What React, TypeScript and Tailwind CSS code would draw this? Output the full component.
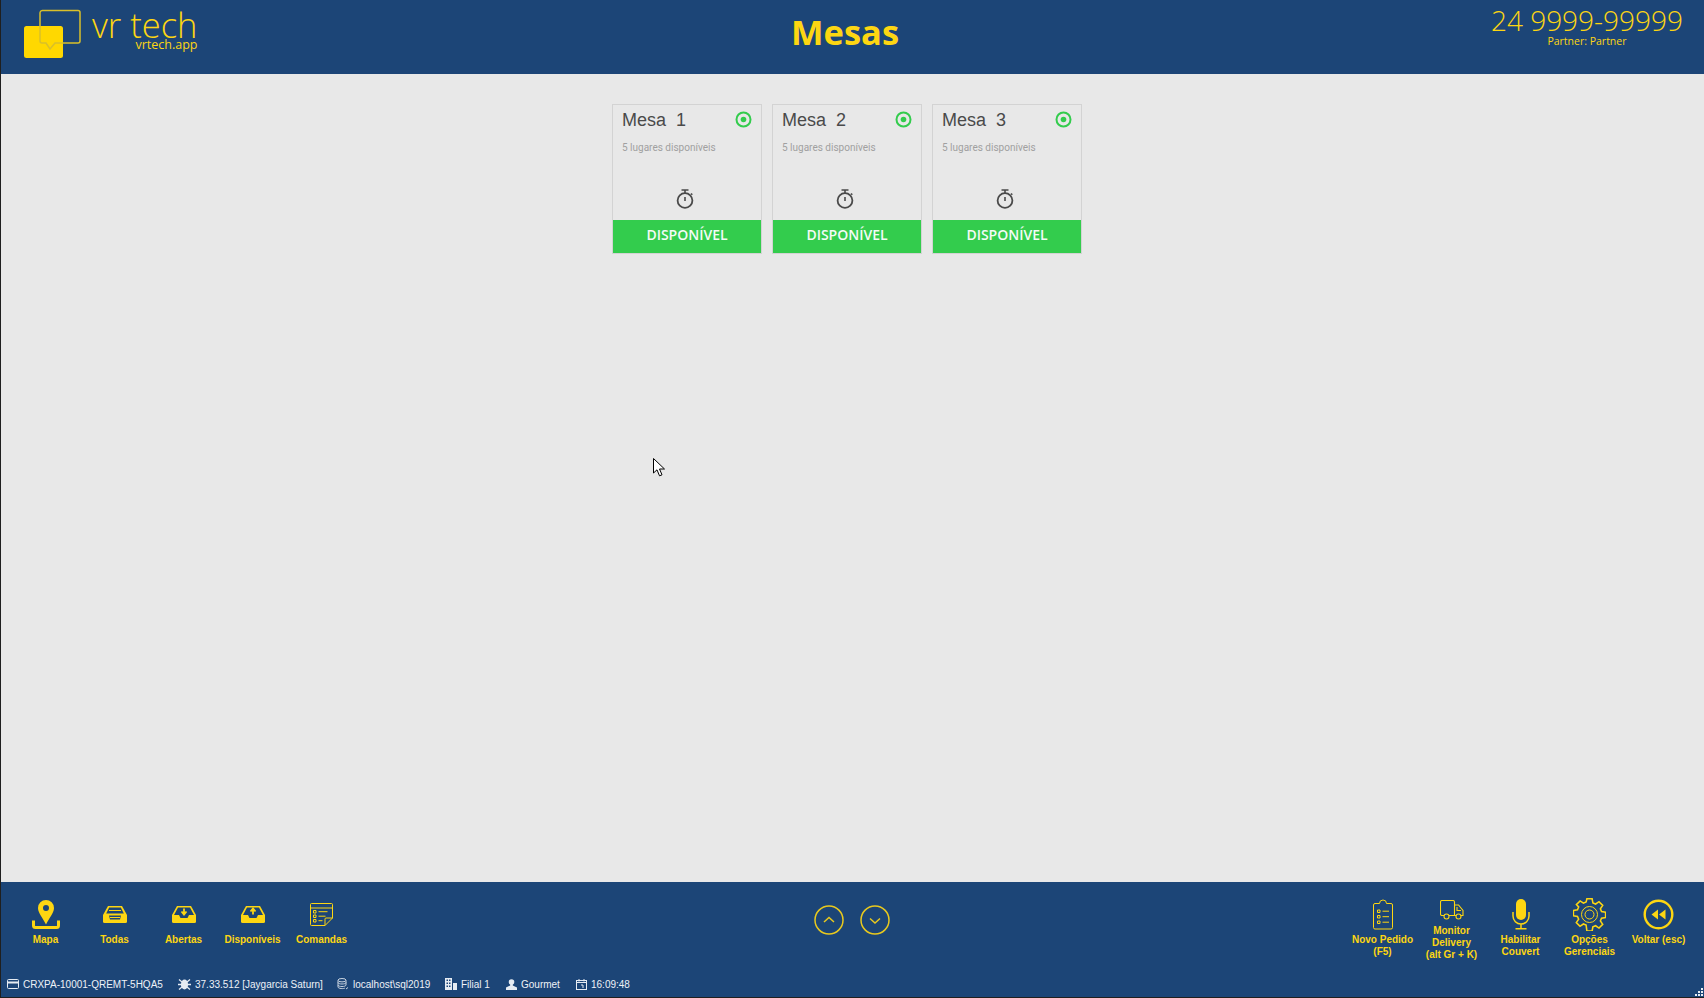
const Logo = () => (
  <svg width="60" height="52" viewBox="0 0 60 52" className="shrink-0">
    <rect x="0" y="17" width="39" height="32" rx="2.500" fill="#ffd800" />
    <path d="M19 1.500h35a2 2 0 0 1 2 2v28.500a2 2 0 0 1-2 2H31l-5 6-4-6h-4a2 2 0 0 1-2-2V4a2.500 2.500 0 0 1 3-2.500z" fill="none" stroke="#d9c02a" strokeWidth="1.500" />
  </svg>
);

const TargetIcon = () => (
  <svg width="17" height="17" viewBox="0 0 17 17" className="mb-[2px]">
    <circle cx="8.500" cy="8.500" r="7" fill="none" stroke="#33cc4d" strokeWidth="2" />
    <circle cx="8.500" cy="8.500" r="2.800" fill="#33cc4d" />
  </svg>
);

const TimerIcon = () => (
  <svg width="18" height="20" viewBox="0 0 18 20" fill="none" stroke="#4a4a4a">
    <circle cx="9" cy="11.500" r="7.400" strokeWidth="1.800" />
    <path d="M5.500 1h7M9 1v3M9 8v4M15 4.500l1.300 1.300" strokeWidth="1.600" />
  </svg>
);

const Mapa = () => (
  <svg width="28" height="29" viewBox="0 0 28 29">
    <path fillRule="evenodd" d="M14 0a8 8 0 0 1 8 8c0 5-5 10-8 16.500C11 18 6 13 6 8a8 8 0 0 1 8-8zm0 5a3 3 0 1 0 0 6 3 3 0 0 0 0-6z" fill="#fdd612" />
    <path d="M1.500 20.500v5a2 2 0 0 0 2 2h21a2 2 0 0 0 2-2v-5" fill="none" stroke="#fdd612" strokeWidth="3" />
  </svg>
);

const Tray = ({ mark }: { mark: 'all' | 'down' | 'up' }) => (
  <svg width="24" height="17" viewBox="0 0 24 17">
    <path d="M5 0h14l5 9v6.500a1.500 1.500 0 0 1-1.500 1.500h-21A1.500 1.500 0 0 1 0 15.500V9z" fill="#fdd612" />
    {mark === 'all' ? (
      <g>
        <path d="M6.200 1.500h11.600l3 6H3.200z" fill="#1c4577" />
        <path d="M6 4.500h12" stroke="#fdd612" strokeWidth="1" />
        <path d="M6 9.500h12l-1 4H7z" fill="#1c4577" />
        <path d="M7 11.500h10" stroke="#fdd612" strokeWidth="1" />
      </g>
    ) : (
      <g>
        <path d="M6 1.500h12l4 7.500h-5l-1.500 3h-7L7 9H2z" fill="#1c4577" />
        <path d={mark === 'down' ? 'M12 2.500v5.500M9.500 5.500 12 8.500l2.500-3' : 'M12 8.500V3M9.500 5.500 12 2.500l2.500 3'} fill="none" stroke="#fdd612" strokeWidth="1.800" />
      </g>
    )}
  </svg>
);

const Comandas = () => (
  <svg width="24" height="24" viewBox="0 0 24 24" fill="none" stroke="#fdd612" strokeWidth="1">
    <path d="M1.500.500h20a1 1 0 0 1 1 1V15l-7.500 7.500H1.500a1 1 0 0 1-1-1V1.500a1 1 0 0 1 1-1zM.500 5h22M22.500 15H16a1 1 0 0 0-1 1v6.500" />
    <path d="M3.500 7.500H6V10H3.500zM3.500 12H6v2.500H3.500zM3.500 16.500H6V19H3.500zM8.500 8.700h9M8.500 13.200h7M8.500 17.700h4" />
  </svg>
);

const Clipboard = () => (
  <svg width="20" height="31" viewBox="0 0 20 31" fill="none" stroke="#fdd612" strokeWidth="1">
    <path d="M6.500 4.500H2a1.500 1.500 0 0 0-1.500 1.500v22.500A1.500 1.500 0 0 0 2 30h16a1.500 1.500 0 0 0 1.500-1.500V6A1.500 1.500 0 0 0 18 4.500h-4.500a3.500 3.500 0 0 0-7 0z" />
    <path d="M4.500 11h2.500v2.500H4.500zM4.500 16.500h2.500V19H4.500zM4.500 22h2.500v2.500H4.500zM9.500 12.200h6.500M9.500 17.700h6.500M9.500 23.200h6.500" />
  </svg>
);

const Truck = () => (
  <svg width="24" height="20" viewBox="0 0 24 20" fill="none" stroke="#fdd612" strokeWidth="1.100">
    <path d="M4 15.500H2a1.500 1.500 0 0 1-1.500-1.500V2A1.500 1.500 0 0 1 2 .500h11A1.500 1.500 0 0 1 14.500 2v13.500H9M14.500 5h4l4.500 5.500v5h-2M14.500 15.500h2" />
    <path d="M17 7v3.500h4" />
    <circle cx="6.500" cy="16.500" r="2.500" />
    <circle cx="18.500" cy="16.500" r="2.500" />
  </svg>
);

const Mic = () => (
  <svg width="18" height="31" viewBox="0 0 18 31">
    <rect x="4" y="0" width="10" height="21" rx="5" fill="#fdd612" />
    <path d="M1 13v4a8 8 0 0 0 16 0v-4M9 25v5M3.500 29.800h11" fill="none" stroke="#fdd612" strokeWidth="1.500" />
  </svg>
);

const Gear = () => (
  <svg width="33" height="33" viewBox="0 0 33 33" fill="none" stroke="#fdd612">
    <path strokeWidth="1.600" d="M13.800 1h5.400l.8 4.200 2.800 1.200 3.500-2.400 3.800 3.800-2.400 3.500 1.200 2.800 4.200.8v5.400l-4.200.8-1.200 2.800 2.400 3.500-3.800 3.800-3.500-2.400-2.800 1.200-.8 4.200h-5.400L13 28.200l-2.800-1.200-3.500 2.400-3.800-3.800 2.400-3.500-1.200-2.800-4.200-.8v-5.400l4.200-.8 1.200-2.800L3 7l3.800-3.800 3.500 2.400L13 4.400z" transform="translate(.5 -.2) scale(.97)" />
    <circle cx="16.500" cy="16.500" r="8" strokeWidth="1" />
    <circle cx="16.500" cy="16.500" r="4.500" strokeWidth="1" />
  </svg>
);

const Rewind = () => (
  <svg width="31" height="31" viewBox="0 0 31 31">
    <circle cx="15.500" cy="15.500" r="13.800" fill="none" stroke="#fdd612" strokeWidth="2.400" />
    <path d="M15 10.500v10l-6.500-5zM22.500 10.500v10l-6.500-5z" fill="#fdd612" />
  </svg>
);

const Round = ({ up }: { up: boolean }) => (
  <svg width="30" height="30" viewBox="0 0 30 30" fill="none" stroke="#e9c91e">
    <circle cx="15" cy="15" r="14" strokeWidth="1.500" />
    <path d={up ? 'M10 17l5-4.500 5 4.500' : 'M10 13.500l5 4.500 5-4.500'} strokeWidth="1.500" />
  </svg>
);

const Card = () => (
  <svg width="12" height="10" viewBox="0 0 12 10" fill="none" stroke="#e6ecf3">
    <rect x=".5" y=".5" width="11" height="9" rx="1" />
    <path d="M.5 3.500h11" strokeWidth="2" />
  </svg>
);

const Bug = () => (
  <svg width="13" height="12" viewBox="0 0 13 12" fill="#e6ecf3">
    <ellipse cx="6.500" cy="6.500" rx="3.600" ry="5" />
    <path d="M1 1.500l3 2.500M12 1.500L9 4M0 6.500h3M13 6.500h-3M1 11.500l3-2.500M12 11.500L9 9" stroke="#e6ecf3" strokeWidth="1.300" />
  </svg>
);

const Db = () => (
  <svg width="12" height="12" viewBox="0 0 12 12" fill="none" stroke="#c8d3e0">
    <ellipse cx="5" cy="2.200" rx="4" ry="1.700" />
    <path d="M1 4.500c0 2 8 2 8 0M1 7c0 2 8 2 8 0M1 2.500v6.500c0 1.700 6 2 7 1M9 2.500V7M9 11l2-1.500" />
  </svg>
);

const Building = () => (
  <svg width="12" height="12" viewBox="0 0 12 12" fill="#e6ecf3">
    <path fillRule="evenodd" d="M0 0h7v12H0zm1.500 1.500v1.500h1.500V1.500zm2.500 0v1.500h1.500V1.500zM1.500 4.500V6h1.500V4.500zm2.500 0V6h1.500V4.500zM1.500 7.500V9h1.500V7.500zm2.500 0V9h1.500V7.500z" />
    <path d="M8 5h4v7H8z" />
  </svg>
);

const User = () => (
  <svg width="11" height="11" viewBox="0 0 11 11" fill="#e6ecf3">
    <circle cx="5.500" cy="3" r="2.800" />
    <path d="M4.200 5h2.600v1.500L11 8.500V11H0V8.500l4.200-2z" />
  </svg>
);

const Calendar = () => (
  <svg width="11" height="11" viewBox="0 0 11 11" fill="none" stroke="#e6ecf3">
    <rect x=".5" y="1.500" width="10" height="9" />
    <path d="M.5 3.500h10M3 0v2.500M8 0v2.500M5 6h2v3" />
  </svg>
);

const Tool = ({ icon, lines, top = false }: { icon: React.ReactNode; lines: string[]; top?: boolean }) => (
  <div className="flex w-[69px] flex-col items-center">
    <div className={`flex items-center justify-center ${top ? 'h-[24px]' : 'h-[33px]'}`}>{icon}</div>
    <div className="mt-[3px] text-center text-[10px] leading-[12px] font-bold text-[#fdd612]">
      {lines.map((line) => (
        <div key={line} className="whitespace-nowrap">{line}</div>
      ))}
    </div>
  </div>
);

const Status = ({ icon, text, className }: { icon: React.ReactNode; text: string; className: string }) => (
  <div className={`flex items-center ${className}`}>
    {icon}
    <span className="ml-[4px] whitespace-nowrap">{text}</span>
  </div>
);

export default function App() {
  return (
    <div className="relative flex h-[998px] flex-col overflow-hidden border-b border-l border-[#1f1f1f] bg-[#e8e8e8] font-['Liberation_Sans',sans-serif]">
      {/* Header */}
      <header className="flex h-[74px] shrink-0 bg-[#1c4577] text-[#fdd612]">
        <div className="flex w-[790px] pl-[23px] pt-[9px]">
          <Logo />
          <div className="ml-[8px] mt-[1px] flex flex-col items-end font-['Open_Sans',sans-serif]">
            <div className="text-[34.500px] leading-[30px] font-light">vr tech</div>
            <div className="text-[12.500px] leading-[10px]">vrtech.app</div>
          </div>
        </div>
        <h1 className="pt-[9px] font-['Open_Sans',sans-serif] text-[34.500px] leading-[45px] font-bold">Mesas</h1>
        <div className="ml-auto flex flex-col items-center pr-[21px] pt-[5px] font-['Open_Sans',sans-serif]">
          <div className="text-[28px] leading-[30px] font-light">24 9999-99999</div>
          <div className="mt-[1px] text-[10.500px] leading-[11px]">Partner: Partner</div>
        </div>
      </header>

      {/* Tables */}
      <main className="flex flex-1 gap-[10px] pl-[611px] pt-[30px]">
        {[1, 2, 3].map((n) => (
          <div key={n} className="flex h-[150px] w-[150px] flex-col border border-[#d3d3d3]">
            <div className="flex items-center justify-between pl-[9px] pr-[9px] pt-[3px]">
              <span className="whitespace-pre text-[18px] leading-[24px] text-[#4a4a4a]">{`Mesa  ${n}`}</span>
              <TargetIcon />
            </div>
            <div className="mt-[9px] pl-[9px] font-['Roboto',sans-serif] text-[10px] leading-[14px] text-[#a0a0a0]">5 lugares disponíveis</div>
            <div className="mt-[34px] flex justify-center pr-[5px]"><TimerIcon /></div>
            <div className="mt-auto flex h-[33px] justify-center bg-[#33cc4d] pt-[5px] font-['Open_Sans',sans-serif] text-[14px] leading-[20px] font-semibold text-[#f4fbf5]">DISPONÍVEL</div>
          </div>
        ))}
      </main>

      {/* Toolbar */}
      <footer className="flex h-[115px] shrink-0 flex-col bg-[#1c4577]">
        <div className="flex justify-between pl-[10px] pr-[11px] pt-[16px]">
          <div className="flex">
            <Tool icon={<Mapa />} lines={['Mapa']} />
            <Tool icon={<Tray mark="all" />} lines={['Todas']} />
            <Tool icon={<Tray mark="down" />} lines={['Abertas']} />
            <Tool icon={<Tray mark="up" />} lines={['Disponíveis']} />
            <Tool icon={<Comandas />} lines={['Comandas']} />
          </div>
          <div className="flex gap-[16px] pt-[7px]">
            <Round up />
            <Round up={false} />
          </div>
          <div className="flex">
            <Tool icon={<Clipboard />} lines={['Novo Pedido', '(F5)']} />
            <Tool icon={<Truck />} top lines={['Monitor', 'Delivery', '(alt Gr + K)']} />
            <Tool icon={<Mic />} lines={['Habilitar', 'Couvert']} />
            <Tool icon={<Gear />} lines={['Opções', 'Gerenciais']} />
            <Tool icon={<Rewind />} lines={['Voltar (esc)']} />
          </div>
        </div>
        <div className="mt-auto flex h-[26px] items-center pl-[6px] text-[10px] text-[#eef2f7]">
          <Status icon={<Card />} text="CRXPA-10001-QREMT-5HQA5" className="w-[171px]" />
          <Status icon={<Bug />} text="37.33.512 [Jaygarcia Saturn]" className="w-[159px]" />
          <Status icon={<Db />} text="localhost\sql2019" className="w-[108px]" />
          <Status icon={<Building />} text="Filial 1" className="w-[61px]" />
          <Status icon={<User />} text="Gourmet" className="w-[70px]" />
          <Status icon={<Calendar />} text="16:09:48" className="w-[70px]" />
        </div>
        {/* resize grip */}
        <svg width="8" height="8" viewBox="0 0 8 8" fill="#e6ecf3" className="absolute bottom-[1px] right-[1px]">
          <path d="M6 0h2v2H6zM3 3h2v2H3zM6 3h2v2H6zM0 6h2v2H0zM3 6h2v2H3zM6 6h2v2H6z" />
        </svg>
      </footer>

      {/* mouse pointer */}
      <svg width="12" height="20" viewBox="0 0 12 20" className="absolute left-[652px] top-[458px]">
        <path d="M.5.500v14.500l3.500-3.200 2.500 6 2.500-1-2.500-5.800h5z" fill="#fff" stroke="#000" />
      </svg>
    </div>
  );
}
